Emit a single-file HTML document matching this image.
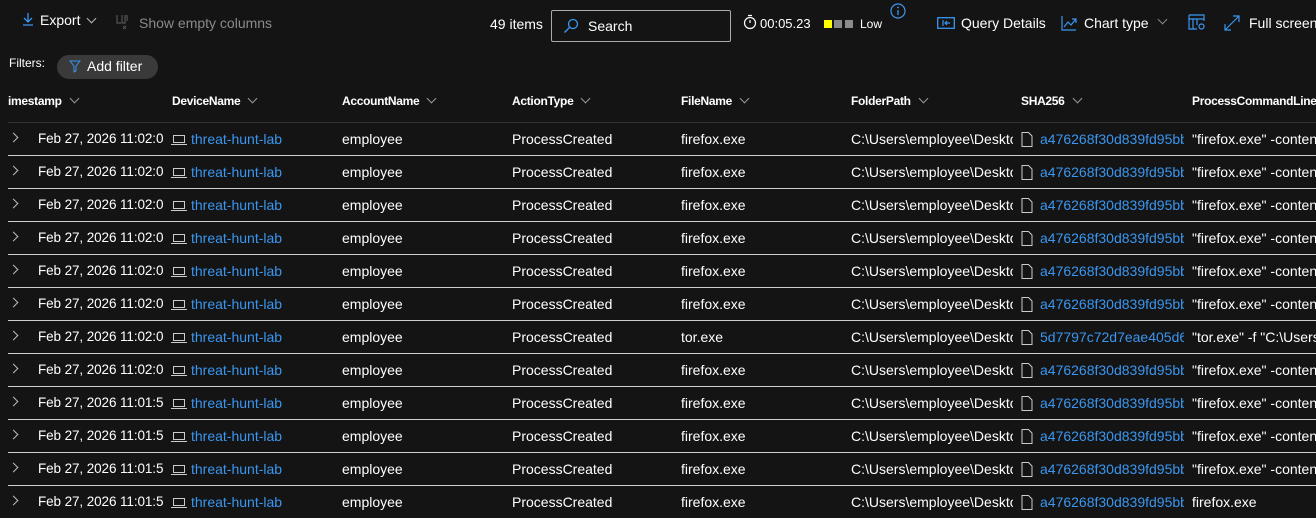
<!DOCTYPE html>
<html><head><meta charset="utf-8"><style>
*{margin:0;padding:0;box-sizing:border-box}
body{width:1316px;height:518px;background:#141414;color:#fff;font-family:"Liberation Sans",sans-serif;font-size:14px;position:relative;overflow:hidden}
.a{position:absolute;white-space:nowrap}
.b{color:#3a96f0}
.g{color:#8a8a8a}
.h{font-weight:bold;font-size:12px;letter-spacing:-0.3px}
.chev{display:inline-block;width:7px;height:7px;border-right:1px solid #bbb;border-bottom:1px solid #bbb;transform:rotate(45deg);margin-left:9px;position:relative;top:-3px}
.line{position:absolute;left:8px;right:0;height:1px;background:#cfcfcf}
svg{position:absolute}
</style></head><body>
<svg style="left:22px;top:12px" width="12" height="14" viewBox="0 0 12 14"><path d="M6 1v9M2 6l4 4 4-4M1 13h10" stroke="#3a96f0" stroke-width="1.3" fill="none"/></svg>
<div class="a" style="left:40px;top:12px">Export</div>
<div class="a" style="left:84px;top:12px"><span class="chev" style="margin-left:4px"></span></div>
<svg style="left:115px;top:14px" width="16" height="16" viewBox="0 0 16 16"><path d="M2 1v8h4M7 1v8h3V1M12 1v6" stroke="#555" fill="none" stroke-width="1.2"/><path d="M8 12l3 3M11 12l-3 3" stroke="#555"/></svg>
<div class="a g" style="left:139px;top:15px">Show empty columns</div>
<div class="a" style="left:490px;top:16px">49 items</div>
<div class="a" style="left:551px;top:10px;width:180px;height:32px;border:1px solid #aaa;border-radius:2px"></div>
<svg style="left:563px;top:18px" width="16" height="16" viewBox="0 0 16 16"><circle cx="10" cy="6" r="4.5" stroke="#3a96f0" stroke-width="1.3" fill="none"/><path d="M7 9L1.5 14.5" stroke="#3a96f0" stroke-width="1.4"/></svg>
<div class="a" style="left:588px;top:18px">Search</div>
<svg style="left:743px;top:14px" width="14" height="16" viewBox="0 0 14 16"><circle cx="7" cy="9" r="5.5" stroke="#fff" fill="none" stroke-width="1.2"/><path d="M5 1.5h4M7 9V6" stroke="#fff" stroke-width="1.2"/></svg>
<div class="a" style="left:760px;top:16px;font-size:13px">00:05.23</div>
<div class="a" style="left:824px;top:20px;width:8px;height:8px;background:#ffff00"></div>
<div class="a" style="left:834px;top:20px;width:8px;height:8px;background:#8a8a8a"></div>
<div class="a" style="left:845px;top:20px;width:8px;height:8px;background:#8a8a8a"></div>
<div class="a" style="left:860px;top:17px;font-size:12px">Low</div>
<svg style="left:890px;top:3px" width="16" height="16" viewBox="0 0 16 16"><circle cx="8" cy="8" r="7" stroke="#3a96f0" fill="none" stroke-width="1.2"/><path d="M8 7v5" stroke="#3a96f0" stroke-width="1.3"/><circle cx="8" cy="4.5" r=".9" fill="#3a96f0"/></svg>
<svg style="left:937px;top:17px" width="18" height="12" viewBox="0 0 18 12"><rect x=".7" y=".7" width="16.6" height="10.6" stroke="#3a96f0" fill="none" stroke-width="1.3"/><path d="M6 3v6M13 6H8M10 4L8 6l2 2" stroke="#3a96f0" stroke-width="1.2" fill="none"/></svg>
<div class="a" style="left:961px;top:15px;font-size:14px">Query Details</div>
<svg style="left:1061px;top:15px" width="16" height="16" viewBox="0 0 16 16"><path d="M1 1v14h14M3 12l4-5 3 3 5-6M11 4h4v4" stroke="#3a96f0" fill="none" stroke-width="1.2"/></svg>
<div class="a" style="left:1084px;top:15px;font-size:14px">Chart type</div>
<div class="a" style="left:1150px;top:13px"><span class="chev" style="border-color:#888"></span></div>
<svg style="left:1188px;top:14px" width="18" height="17" viewBox="0 0 18 17"><path d="M1 1h15v6M1 1v14h8M1 5h15M5 5v10M9 5v6" stroke="#3a96f0" fill="none" stroke-width="1.2"/><circle cx="13.5" cy="12.5" r="2.5" stroke="#3a96f0" fill="none" stroke-width="1.2"/></svg>
<svg style="left:1224px;top:15px" width="16" height="16" viewBox="0 0 16 16"><path d="M1 15L15 1M9 1h6v6M1 9v6h6" stroke="#3a96f0" fill="none" stroke-width="1.2"/></svg>
<div class="a" style="left:1249px;top:15px;font-size:14px">Full screen</div>
<div class="a" style="left:9px;top:56px;font-size:12px">Filters:</div>
<div class="a" style="left:57px;top:55px;width:101px;height:24px;background:#3a3a3a;border-radius:12px"></div>
<svg style="left:69px;top:60px" width="12" height="13" viewBox="0 0 12 13"><path d="M1 1h10L7 6v5L5 12V6z" stroke="#3a96f0" fill="none"/></svg>
<div class="a" style="left:87px;top:58px;font-size:14px">Add filter</div>
<div class="a h" style="left:8px;top:94px">imestamp<span class="chev" style="border-color:#999"></span></div>
<div class="a h" style="left:172px;top:94px">DeviceName<span class="chev" style="border-color:#999"></span></div>
<div class="a h" style="left:342px;top:94px">AccountName<span class="chev" style="border-color:#999"></span></div>
<div class="a h" style="left:512px;top:94px">ActionType<span class="chev" style="border-color:#999"></span></div>
<div class="a h" style="left:681px;top:94px">FileName<span class="chev" style="border-color:#999"></span></div>
<div class="a h" style="left:851px;top:94px">FolderPath<span class="chev" style="border-color:#999"></span></div>
<div class="a h" style="left:1021px;top:94px">SHA256<span class="chev" style="border-color:#999"></span></div>
<div class="a h" style="left:1192px;top:94px">ProcessCommandLine</div>
<div class="line" style="top:122px;background:#333"></div>
<div id="rows"></div>
<script>
var d=[["11:02:0","firefox.exe","a476268f30d839fd95bb",'"firefox.exe" -content'],["11:02:0","firefox.exe","a476268f30d839fd95bb",'"firefox.exe" -content'],["11:02:0","firefox.exe","a476268f30d839fd95bb",'"firefox.exe" -content'],["11:02:0","firefox.exe","a476268f30d839fd95bb",'"firefox.exe" -content'],["11:02:0","firefox.exe","a476268f30d839fd95bb",'"firefox.exe" -content'],["11:02:0","firefox.exe","a476268f30d839fd95bb",'"firefox.exe" -content'],["11:02:0","tor.exe","5d7797c72d7eae405d6",'"tor.exe" -f "C:\\Users'],["11:02:0","firefox.exe","a476268f30d839fd95bb",'"firefox.exe" -content'],["11:01:5","firefox.exe","a476268f30d839fd95bb",'"firefox.exe" -content'],["11:01:5","firefox.exe","a476268f30d839fd95bb",'"firefox.exe" -content'],["11:01:5","firefox.exe","a476268f30d839fd95bb",'"firefox.exe" -content'],["11:01:5","firefox.exe","a476268f30d839fd95bb","firefox.exe"]];
var h="";
d.forEach(function(r,i){var t=131+33*i;
h+='<div class="a" style="left:10px;top:'+(t-3)+'px"><span style="display:inline-block;width:7px;height:7px;border-right:1px solid #bbb;border-bottom:1px solid #bbb;transform:rotate(-45deg)"></span></div>';
h+='<div class="a" style="left:38px;top:'+t+'px;width:127px;overflow:hidden;font-size:13.5px;letter-spacing:-0.1px">Feb 27, 2026 '+r[0]+'</div>';
h+='<svg style="left:171px;top:'+(t+3)+'px" width="16" height="12" viewBox="0 0 16 12"><rect x="2.5" y="1.5" width="11" height="7" stroke="#ccc" fill="none"/><path d="M0 10.5h16" stroke="#ccc"/></svg>';
h+='<div class="a b" style="left:191px;top:'+t+'px">threat-hunt-lab</div>';
h+='<div class="a" style="left:342px;top:'+t+'px">employee</div>';
h+='<div class="a" style="left:512px;top:'+t+'px">ProcessCreated</div>';
h+='<div class="a" style="left:681px;top:'+t+'px">'+r[1]+'</div>';
h+='<div class="a" style="left:851px;top:'+t+'px;width:162px;overflow:hidden">C:\\Users\\employee\\Desktop</div>';
h+='<svg style="left:1021px;top:'+(t+1)+'px" width="12" height="15" viewBox="0 0 12 15"><path d="M1 .5h6.5l3.5 3.5v10.5H1z" stroke="#ccc" fill="none"/></svg>';
h+='<div class="a b" style="left:1040px;top:'+t+'px;width:144px;overflow:hidden">'+r[2]+'</div>';
h+='<div class="a" style="left:1192px;top:'+t+'px">'+r[3]+'</div>';
if(i<11)h+='<div class="line" style="top:'+(t+24)+'px"></div>';
});
document.getElementById("rows").innerHTML=h;
</script>
</body></html>
